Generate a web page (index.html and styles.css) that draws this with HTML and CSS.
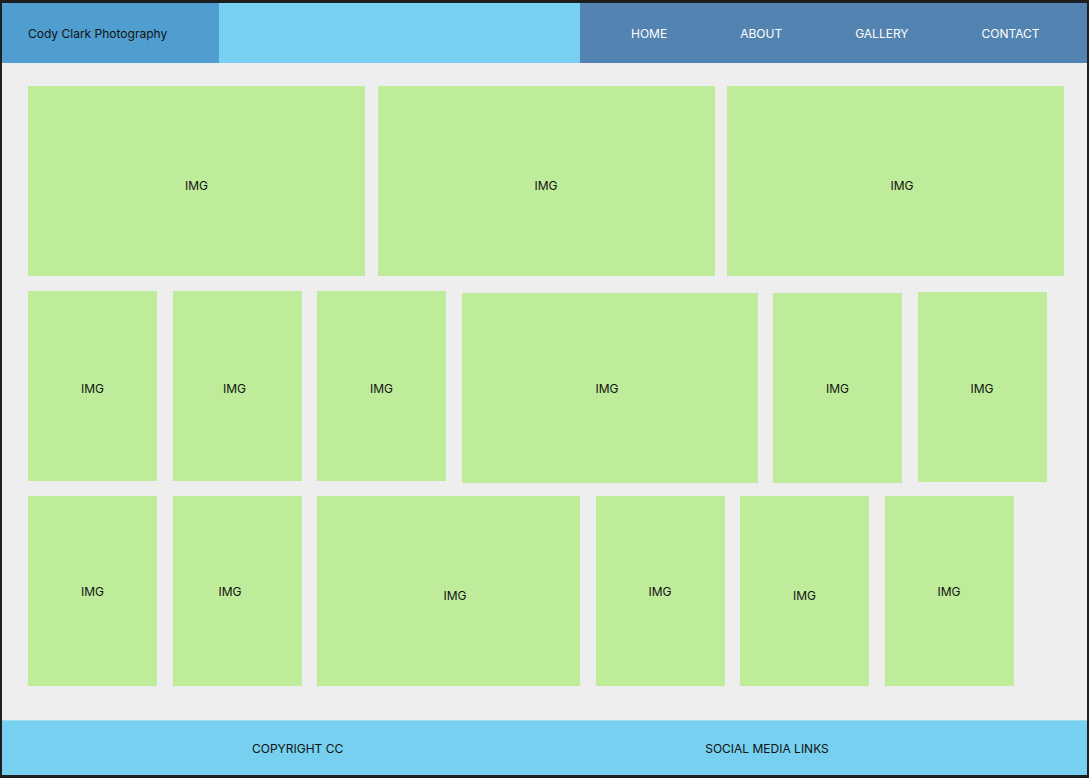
FILE: index.html
```html
<!DOCTYPE html>
<html lang="en">
<head>
    <meta charset="UTF-8">
    <meta name="viewport" content="width=device-width, initial-scale=1.0">
    <title>Cody Clark Photography</title>
    <link rel="stylesheet" href="styles.css">
</head>
<body>
<div class="page">
    <header class="header">
        <div class="logo">Cody Clark Photography</div>
        <div class="header-fill"></div>
        <nav class="nav">
            <a href="#">HOME</a>
            <a href="#">ABOUT</a>
            <a href="#">GALLERY</a>
            <a href="#">CONTACT</a>
        </nav>
    </header>

    <main class="gallery">
        <div class="row row-wide">
            <div class="img big">IMG</div>
            <div class="img big">IMG</div>
            <div class="img big nudge-right">IMG</div>
        </div>

        <div class="row">
            <div class="img label-low-sm">IMG</div>
            <div class="img label-low-sm nudge-left-sm">IMG</div>
            <div class="img label-low-sm">IMG</div>
            <div class="img mid down-2 nudge-left-sm">IMG</div>
            <div class="img down-2">IMG</div>
            <div class="img down-1 label-low-xs">IMG</div>
        </div>

        <div class="row">
            <div class="img">IMG</div>
            <div class="img nudge-left">IMG</div>
            <div class="img wide nudge-right label-low">IMG</div>
            <div class="img">IMG</div>
            <div class="img label-low">IMG</div>
            <div class="img">IMG</div>
        </div>
    </main>

    <footer class="footer">
        <span>COPYRIGHT CC</span>
        <span>SOCIAL MEDIA LINKS</span>
    </footer>
</div>
</body>
</html>
```

FILE: styles.css
```css
html, body {
    margin: 0;
    padding: 0;
}

body {
    background-color: #1e1e1e;
    font-family: Inter, "Liberation Sans", Arial, sans-serif;
    font-size: 12px;
    color: #111;
    padding: 3px 2px 3px 2px;
    height: 778px;
    box-sizing: border-box;
}

.page {
    background-color: #eeeeee;
    height: 772px;
    width: 1085px;
    display: flex;
    flex-direction: column;
}

/* header */
.header {
    display: flex;
    height: 60px;
}

.logo {
    width: 217px;
    background-color: #4f9ecf;
    padding-left: 26px;
    box-sizing: border-box;
    display: flex;
    align-items: center;
}

.header-fill {
    width: 361px;
    background-color: #78d1f0;
}

.nav {
    flex: 1;
    background-color: #5383b0;
    display: flex;
    align-items: center;
    padding-left: 51px;
    gap: 73px;
}

.nav a {
    color: #fff;
    text-decoration: none;
}

/* gallery */
.gallery {
    flex: 1;
    padding: 23px 0 0 26px;
    display: flex;
    flex-direction: column;
    gap: 15px;
}

.row {
    display: flex;
    align-items: flex-start;
    gap: 15.5px;
    height: 190px;
}

.row-wide {
    gap: 12.5px;
}

.img {
    width: 129px;
    height: 190px;
    flex-shrink: 0;
    background-color: #bfec9b;
    display: flex;
    align-items: center;
    justify-content: center;
    box-sizing: border-box;
}

.img.big {
    width: 337px;
    padding-top: 8px;
}

.img.mid {
    width: 296px;
}

.img.wide {
    width: 263px;
}

.down-1 { margin-top: 1px; }
.down-2 { margin-top: 2px; }

.nudge-right { padding-left: 13px; }
.nudge-left { padding-right: 14px; }
.nudge-left-sm { padding-right: 5px; }
.label-low { padding-top: 8px; }
.label-low-sm { padding-top: 4px; }
.label-low-xs { padding-top: 2px; }

/* footer */
.footer {
    height: 55px;
    background-color: #77d0ef;
    border-top: 1px solid #9bdcf0;
    display: flex;
    align-items: center;
    padding-left: 250px;
    gap: 362px;
    box-sizing: border-box;
}
```
